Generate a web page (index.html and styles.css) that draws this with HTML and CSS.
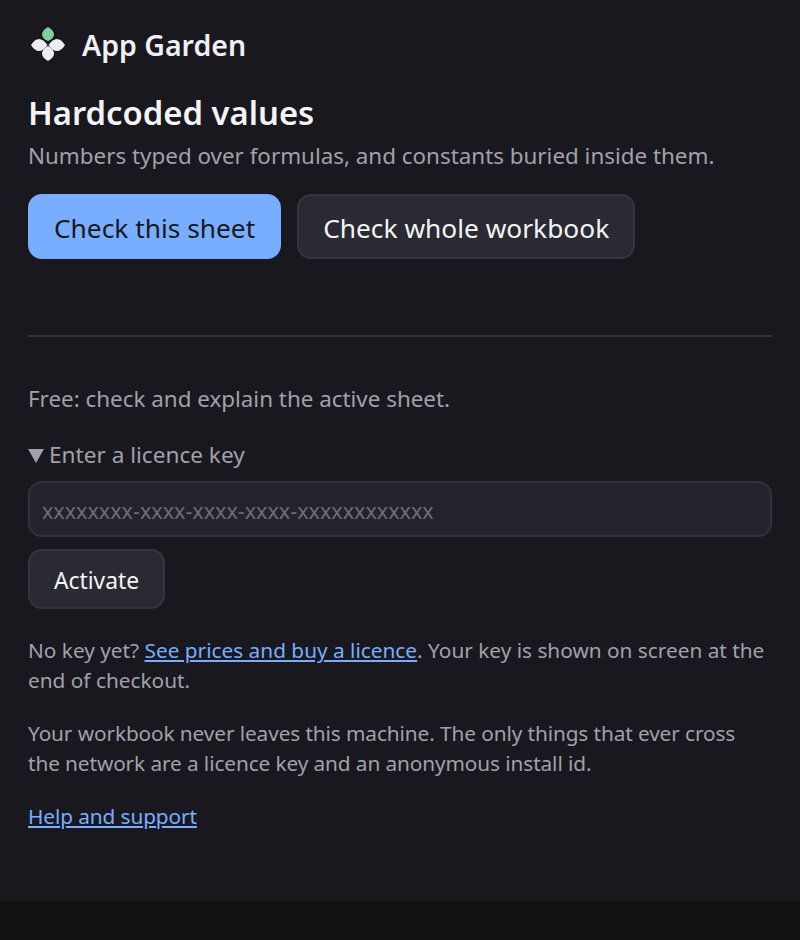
FILE: index.html
```html
<!DOCTYPE html>
<html>
	<head>
		<meta charset="utf-8" />
		<title>Hardcoded values</title>
		<link rel="stylesheet" href="styles.css">
	</head>
	<body>
		<div class="panel">
			<div class="brand">
				<svg class="logo" width="38" height="38" viewBox="0 0 38 38">
					<path class="leaf-top" d="M20 1C28 5 28 12 20 15C12 12 12 5 20 1Z" />
					<path d="M3 19C8 11 14 11 19.500 19C14 27 8 27 3 19Z" />
					<path d="M37 19C32 11 26 11 20.500 19C26 27 32 27 37 19Z" />
					<path d="M20 20C28 24 28 31 20 35C12 31 12 24 20 20Z" />
				</svg>
				<span class="brand-name">App Garden</span>
			</div>
			<h1>Hardcoded values</h1>
			<p class="sub">Numbers typed over formulas, and constants buried inside them.</p>
			<div class="actions">
				<button class="btn big primary">Check this sheet</button>
				<button class="btn big">Check whole workbook</button>
			</div>
			<hr />
			<p class="tier">Free: check and explain the active sheet.</p>
			<div class="summary"><span class="arrow"></span>Enter a licence key</div>
			<input class="key" type="text" placeholder="xxxxxxxx-xxxx-xxxx-xxxx-xxxxxxxxxxxx" />
			<button class="btn small">Activate</button>
			<p class="note first">No key yet? <a href="#">See prices and buy a licence</a>. Your key is shown on screen at the end of checkout.</p>
			<p class="note">Your workbook never leaves this machine. The only things that ever cross the network are a licence key and an anonymous install id.</p>
			<p class="note"><a href="#">Help and support</a></p>
		</div>
	</body>
</html>
```

FILE: styles.css
```css
*{
	padding: 0px;
	margin: 0px;
	box-sizing: border-box;
}
html{
	background-color: #111111;
}
body{
	font-family: "Noto Sans", "Open Sans", sans-serif;
	color: #a1a1aa;
}
.panel{
	height: 901px;
	padding: 26px 28px 0;
	background-color: #18181e;
}
.brand{
	display: flex;
	align-items: center;
	gap: 16px;
	height: 38px;
}
.logo{
	fill: #ececf1;
	flex: none;
}
.leaf-top{
	fill: #7fcf9f;
}
.brand-name{
	font-size: 28.500px;
	font-weight: 600;
	color: #f0f0f4;
}
h1{
	margin-top: 29px;
	font-size: 32.800px;
	line-height: 40px;
	font-weight: 600;
	color: #f4f4f6;
}
.sub{
	margin-top: 8px;
	font-size: 22.400px;
	line-height: 30px;
}
.actions{
	display: flex;
	gap: 16px;
	margin-top: 23px;
}
.btn{
	font-family: inherit;
	border: 2px solid #35353d;
	background-color: #2a2a32;
	color: #f4f4f6;
	cursor: pointer;
}
.big{
	height: 65px;
	padding: 2px 24px 0;
	border-radius: 14px;
	font-size: 26.300px;
}
.primary{
	border-color: #78adff;
	background-color: #78adff;
	color: #18181e;
}
hr{
	margin-top: 76px;
	border: none;
	border-top: 2px solid #32323a;
}
.tier{
	margin-top: 47px;
	font-size: 22.400px;
	line-height: 30px;
}
.summary{
	margin-top: 26px;
	font-size: 22.600px;
	line-height: 30px;
}
.arrow{
	display: inline-block;
	margin-right: 5px;
	border-left: 8px solid transparent;
	border-right: 8px solid transparent;
	border-top: 14px solid #a1a1aa;
}
.key{
	display: block;
	width: 100%;
	height: 56px;
	margin-top: 11px;
	padding: 2px 12px 0;
	border: 2px solid #32323a;
	border-radius: 14px;
	background-color: #23232b;
	font-family: inherit;
	font-size: 21.500px;
	color: #f4f4f6;
	outline: none;
}
.key::placeholder{
	color: #6e6e6e;
}
.small{
	display: block;
	height: 60px;
	margin-top: 12px;
	padding: 3px 24px 0;
	border-radius: 14px;
	font-size: 22.800px;
}
.note{
	max-width: 738px;
	margin-top: 23px;
	font-size: 20.800px;
	line-height: 30px;
	letter-spacing: -0.1px;
}
.note.first{
	margin-top: 26px;
	letter-spacing: 0;
}
a{
	color: #78adff;
}
```
